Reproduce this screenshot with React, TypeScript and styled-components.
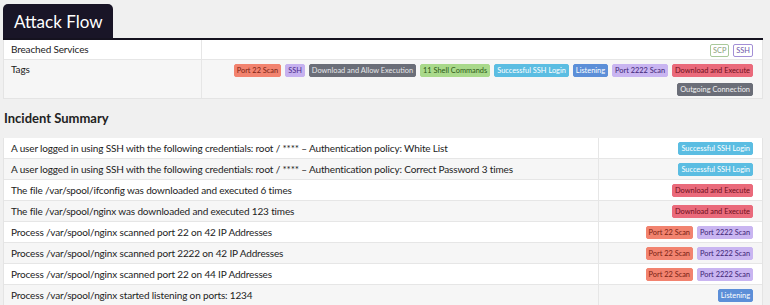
import { FC } from "react";
import styled, { createGlobalStyle } from "styled-components";

type Tone =
  | "port22"
  | "ssh"
  | "allowExec"
  | "shell"
  | "sshLogin"
  | "listening"
  | "port2222"
  | "downloadExec"
  | "outgoing"
  | "outlineGreen"
  | "outlinePurple";

const tones: Record<Tone, { bg: string; fg: string; border?: string }> = {
  port22: { bg: "#f2836f", fg: "#7a1f12" },
  ssh: { bg: "#c6b1ef", fg: "#4a2a8a" },
  allowExec: { bg: "#6b6e78", fg: "#e6e7ea" },
  shell: { bg: "#a9d98b", fg: "#2d5a16" },
  sshLogin: { bg: "#5bbde2", fg: "#ffffff" },
  listening: { bg: "#5c8fd8", fg: "#ffffff" },
  port2222: { bg: "#c9b5f1", fg: "#3d2475" },
  downloadExec: { bg: "#ea6a7b", fg: "#6e0f1c" },
  outgoing: { bg: "#6b6e78", fg: "#f0f0f2" },
  outlineGreen: { bg: "#ffffff", fg: "#8aa07a", border: "#a9c99a" },
  outlinePurple: { bg: "#ffffff", fg: "#6d55a8", border: "#a38fd6" },
};

const GlobalStyle = createGlobalStyle`
  body {
    margin: 0;
    background: #f0f0f0;
    font-family: Lato, "Noto Sans", Arial, sans-serif;
    color: #222;
  }
`;

const Page = styled.div`
  padding: 4px 7px 0 3px;
`;

const TabBar = styled.div`
  display: flex;
  border-bottom: 2px solid #15121f;
`;

const Tab = styled.div`
  background: #191527;
  color: #ffffff;
  font-size: 17px;
  line-height: 22px;
  padding: 7px 10px 5px 11px;
  border-radius: 5px 5px 0 0;
`;

const Table = styled.div`
  background: #ffffff;
  border: 1px solid #e4e4e4;
  border-top: none;
`;

const Row = styled.div<{ $shaded?: boolean; $cols: string }>`
  display: grid;
  grid-template-columns: ${(p) => p.$cols};
  background: ${(p) => (p.$shaded ? "#f6f6f6" : "#ffffff")};
  border-bottom: 1px solid #e6e6e6;
  &:last-child {
    border-bottom: none;
  }
`;

const LabelCell = styled.div<{ $tall?: boolean }>`
  font-size: 10px;
  letter-spacing: -0.15px;
  line-height: 13px;
  padding: ${(p) => (p.$tall ? "4px 8px 3px 7px" : "3px 8px 3px 7px")};
  border-right: 1px solid #e6e6e6;
  white-space: nowrap;
`;

const BadgeCell = styled.div`
  display: flex;
  flex-wrap: wrap;
  justify-content: flex-end;
  align-content: flex-start;
  gap: 6px 4px;
  padding: 4px 9px 2px 8px;
`;

const Badge = styled.span<{ $tone: Tone }>`
  display: inline-block;
  font-size: 7.4px;
  line-height: 11px;
  padding: 0 2px;
  border-radius: 2px;
  background: ${(p) => tones[p.$tone].bg};
  color: ${(p) => tones[p.$tone].fg};
  border: 1px solid ${(p) => tones[p.$tone].border ?? tones[p.$tone].bg};
  white-space: nowrap;
`;

const Heading = styled.h2`
  margin: 0;
  font-size: 13px;
  line-height: 16px;
  font-weight: 700;
  padding: 11px 0 12px 1px;
`;

interface IIncident {
  text: string;
  tags: { label: string; tone: Tone }[];
}

const incidents: IIncident[] = [
  {
    text: "A user logged in using SSH with the following credentials: root / **** \u2013 Authentication policy: White List",
    tags: [{ label: "Successful SSH Login", tone: "sshLogin" }],
  },
  {
    text: "A user logged in using SSH with the following credentials: root / **** \u2013 Authentication policy: Correct Password 3 times",
    tags: [{ label: "Successful SSH Login", tone: "sshLogin" }],
  },
  {
    text: "The file /var/spool/ifconfig was downloaded and executed 6 times",
    tags: [{ label: "Download and Execute", tone: "downloadExec" }],
  },
  {
    text: "The file /var/spool/nginx was downloaded and executed 123 times",
    tags: [{ label: "Download and Execute", tone: "downloadExec" }],
  },
  {
    text: "Process /var/spool/nginx scanned port 22 on 42 IP Addresses",
    tags: [
      { label: "Port 22 Scan", tone: "port22" },
      { label: "Port 2222 Scan", tone: "port2222" },
    ],
  },
  {
    text: "Process /var/spool/nginx scanned port 2222 on 42 IP Addresses",
    tags: [
      { label: "Port 22 Scan", tone: "port22" },
      { label: "Port 2222 Scan", tone: "port2222" },
    ],
  },
  {
    text: "Process /var/spool/nginx scanned port 22 on 44 IP Addresses",
    tags: [
      { label: "Port 22 Scan", tone: "port22" },
      { label: "Port 2222 Scan", tone: "port2222" },
    ],
  },
  {
    text: "Process /var/spool/nginx started listening on ports: 1234",
    tags: [{ label: "Listening", tone: "listening" }],
  },
];

const flowTags: { label: string; tone: Tone }[] = [
  { label: "Port 22 Scan", tone: "port22" },
  { label: "SSH", tone: "ssh" },
  { label: "Download and Allow Execution", tone: "allowExec" },
  { label: "11 Shell Commands", tone: "shell" },
  { label: "Successful SSH Login", tone: "sshLogin" },
  { label: "Listening", tone: "listening" },
  { label: "Port 2222 Scan", tone: "port2222" },
  { label: "Download and Execute", tone: "downloadExec" },
  { label: "Outgoing Connection", tone: "outgoing" },
];

const FlowCols = "198px 1fr";
const SummaryCols = "595px 1fr";

const App: FC = () => (
  <Page>
    <GlobalStyle />
    <TabBar>
      <Tab>Attack Flow</Tab>
    </TabBar>
    <Table>
      <Row $cols={FlowCols}>
        <LabelCell>Breached Services</LabelCell>
        <BadgeCell>
          <Badge $tone="outlineGreen">SCP</Badge>
          <Badge $tone="outlinePurple">SSH</Badge>
        </BadgeCell>
      </Row>
      <Row $cols={FlowCols} $shaded>
        <LabelCell>Tags</LabelCell>
        <BadgeCell>
          {flowTags.map((t) => (
            <Badge key={t.label} $tone={t.tone}>
              {t.label}
            </Badge>
          ))}
        </BadgeCell>
      </Row>
    </Table>
    <Heading>Incident Summary</Heading>
    <Table>
      {incidents.map((inc, i) => (
        <Row key={i} $cols={SummaryCols} $shaded={i % 2 === 1}>
          <LabelCell $tall>{inc.text}</LabelCell>
          <BadgeCell>
            {inc.tags.map((t) => (
              <Badge key={t.label} $tone={t.tone}>
                {t.label}
              </Badge>
            ))}
          </BadgeCell>
        </Row>
      ))}
    </Table>
  </Page>
);

export default App;
